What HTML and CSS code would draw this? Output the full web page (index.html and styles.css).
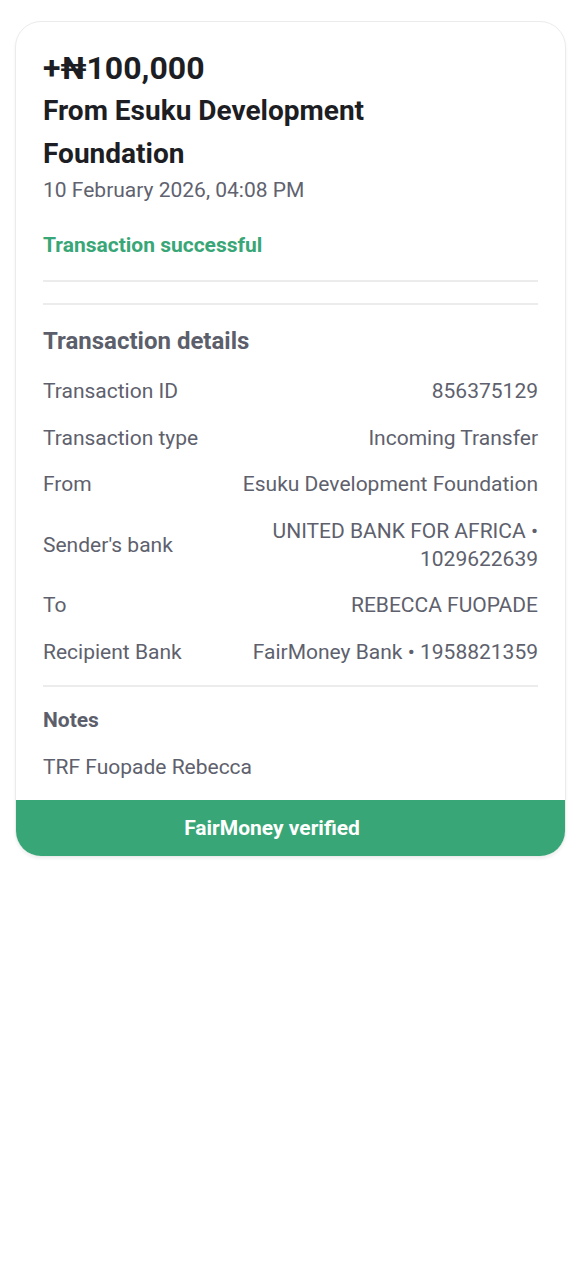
FILE: index.html
```html
<!DOCTYPE html>
<html lang="en">
<head>
  <meta charset="UTF-8" />
  <meta name="viewport" content="width=device-width, initial-scale=1.0"/>
  <title>Transaction Receipt</title>
  <link rel="stylesheet" href="styles.css">
</head>
<body>

  <div class="receipt">
    <div class="receipt-body">
      <div class="amount">+₦100,000</div>
      <div class="title">From Esuku Development Foundation</div>
      <div class="date">10 February 2026, 04:08 PM</div>
      <div class="status">Transaction successful</div>

      <div class="divider first"></div>
      <div class="divider"></div>

      <div class="section-title">Transaction details</div>

      <div class="details">
        <div class="row">
          <div class="label">Transaction ID</div>
          <div class="value">856375129</div>
        </div>
        <div class="row">
          <div class="label">Transaction type</div>
          <div class="value">Incoming Transfer</div>
        </div>
        <div class="row">
          <div class="label">From</div>
          <div class="value">Esuku Development Foundation</div>
        </div>
        <div class="row">
          <div class="label">Sender's bank</div>
          <div class="value">UNITED BANK FOR AFRICA • 1029622639</div>
        </div>
        <div class="row">
          <div class="label">To</div>
          <div class="value">REBECCA FUOPADE</div>
        </div>
        <div class="row">
          <div class="label">Recipient Bank</div>
          <div class="value">FairMoney Bank • 1958821359</div>
        </div>
      </div>

      <div class="divider notes-divider"></div>

      <div class="notes-title">Notes</div>
      <div class="notes-text">TRF Fuopade Rebecca</div>
    </div>

    <div class="verified">FairMoney verified</div>
  </div>

</body>
</html>
```

FILE: styles.css
```css
body {
  background-color: #fff;
  color: #1d1e24;
  font-family: Roboto, "Liberation Sans", Arial, sans-serif;
  margin: 0;
  padding: 21px 15px;
}

.receipt {
  border: 1.5px solid #ebebeb;
  border-radius: 26px;
  overflow: hidden;
  box-shadow: 0 2px 3px rgba(0, 0, 0, 0.06);
}

.receipt-body {
  padding: 26px 27px 19px 27px;
}

.amount {
  font-size: 32px;
  font-weight: bold;
  line-height: 41px;
}

.title {
  font-size: 28px;
  font-weight: bold;
  line-height: 43px;
  max-width: 380px;
}

.date {
  font-size: 21px;
  line-height: 30px;
  color: #5f626f;
}

.status {
  margin-top: 25px;
  font-size: 21px;
  font-weight: bold;
  line-height: 30px;
  color: #38a676;
}

.divider {
  height: 2px;
  background-color: #ececec;
}

.divider.first {
  margin-top: 20px;
  margin-bottom: 21px;
}

.section-title {
  margin-top: 21px;
  font-size: 24px;
  font-weight: bold;
  line-height: 30px;
  color: #5c5f6b;
}

.details {
  margin-top: 21px;
  display: flex;
  flex-direction: column;
  gap: 18.5px;
}

.row {
  display: flex;
  justify-content: space-between;
  align-items: center;
  gap: 24px;
  font-size: 21px;
  line-height: 28px;
  color: #5e616d;
}

.label {
  flex-shrink: 0;
}

.value {
  text-align: right;
}

.notes-divider {
  margin-top: 19px;
}

.notes-title {
  margin-top: 19px;
  font-size: 21px;
  font-weight: bold;
  line-height: 28px;
  color: #5c5f6b;
}

.notes-text {
  margin-top: 19px;
  font-size: 21px;
  line-height: 28px;
  color: #5e616d;
}

.verified {
  background-color: #38a676;
  color: #fff;
  font-size: 21px;
  font-weight: bold;
  height: 56px;
  line-height: 56px;
  text-align: center;
  padding-right: 37px;
}
```
